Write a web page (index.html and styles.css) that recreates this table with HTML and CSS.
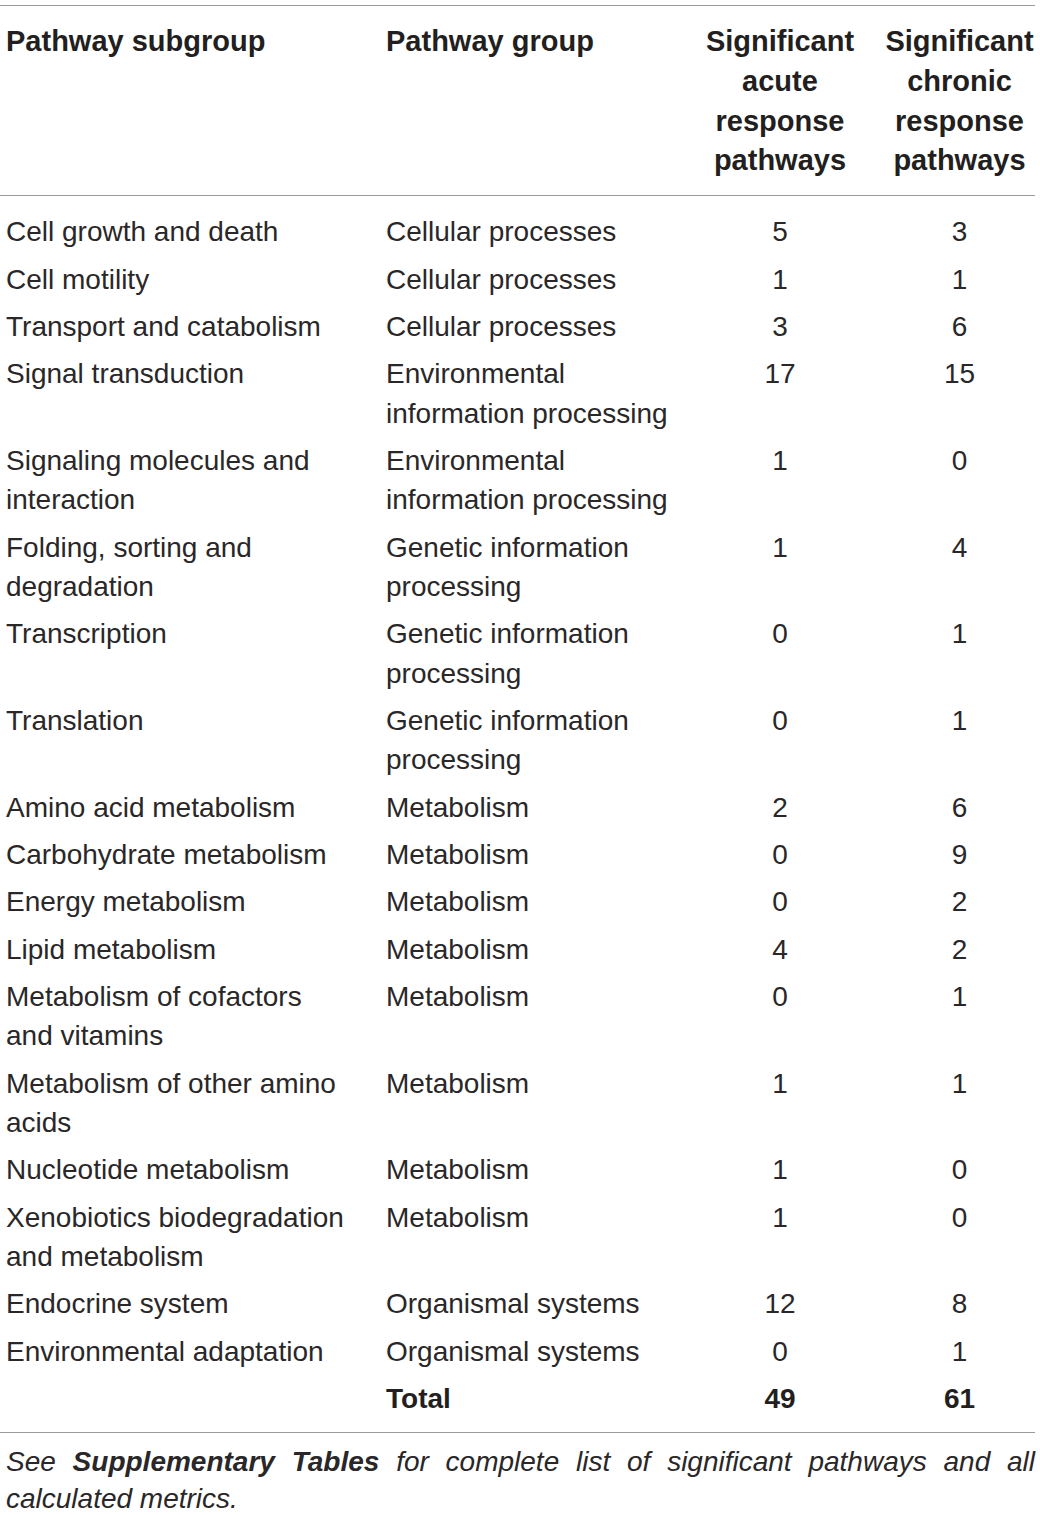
FILE: index.html
```html
<!DOCTYPE html>
<html lang="en">
<head>
<meta charset="utf-8">
<link rel="stylesheet" href="styles.css">
<title>Pathways</title>
</head>
<body>
<div class="wrap">
<table class="tbl">
  <colgroup>
    <col class="c1"><col class="c2"><col class="c3"><col class="c4">
  </colgroup>
  <thead>
    <tr>
      <th class="l">Pathway subgroup</th>
      <th class="l">Pathway group</th>
      <th class="n n3">Significant acute response pathways</th>
      <th class="n">Significant chronic response pathways</th>
    </tr>
  </thead>
  <tbody>
    <tr class="first"><td class="l">Cell growth and death</td><td class="l">Cellular processes</td><td class="n n3">5</td><td class="n">3</td></tr>
    <tr><td class="l">Cell motility</td><td class="l">Cellular processes</td><td class="n n3">1</td><td class="n">1</td></tr>
    <tr><td class="l">Transport and catabolism</td><td class="l">Cellular processes</td><td class="n n3">3</td><td class="n">6</td></tr>
    <tr><td class="l">Signal transduction</td><td class="l">Environmental information processing</td><td class="n n3">17</td><td class="n">15</td></tr>
    <tr><td class="l">Signaling molecules and interaction</td><td class="l">Environmental information processing</td><td class="n n3">1</td><td class="n">0</td></tr>
    <tr><td class="l">Folding, sorting and degradation</td><td class="l">Genetic information processing</td><td class="n n3">1</td><td class="n">4</td></tr>
    <tr><td class="l">Transcription</td><td class="l">Genetic information processing</td><td class="n n3">0</td><td class="n">1</td></tr>
    <tr><td class="l">Translation</td><td class="l">Genetic information processing</td><td class="n n3">0</td><td class="n">1</td></tr>
    <tr><td class="l">Amino acid metabolism</td><td class="l">Metabolism</td><td class="n n3">2</td><td class="n">6</td></tr>
    <tr><td class="l">Carbohydrate metabolism</td><td class="l">Metabolism</td><td class="n n3">0</td><td class="n">9</td></tr>
    <tr><td class="l">Energy metabolism</td><td class="l">Metabolism</td><td class="n n3">0</td><td class="n">2</td></tr>
    <tr><td class="l">Lipid metabolism</td><td class="l">Metabolism</td><td class="n n3">4</td><td class="n">2</td></tr>
    <tr><td class="l">Metabolism of cofactors and vitamins</td><td class="l">Metabolism</td><td class="n n3">0</td><td class="n">1</td></tr>
    <tr><td class="l">Metabolism of other amino acids</td><td class="l">Metabolism</td><td class="n n3">1</td><td class="n">1</td></tr>
    <tr><td class="l">Nucleotide metabolism</td><td class="l">Metabolism</td><td class="n n3">1</td><td class="n">0</td></tr>
    <tr><td class="l">Xenobiotics biodegradation and metabolism</td><td class="l">Metabolism</td><td class="n n3">1</td><td class="n">0</td></tr>
    <tr><td class="l">Endocrine system</td><td class="l">Organismal systems</td><td class="n n3">12</td><td class="n">8</td></tr>
    <tr><td class="l">Environmental adaptation</td><td class="l">Organismal systems</td><td class="n n3">0</td><td class="n">1</td></tr>
    <tr class="total"><td class="l"></td><td class="l b">Total</td><td class="n n3 b">49</td><td class="n b">61</td></tr>
  </tbody>
</table>
<p class="note">See <b>Supplementary Tables</b> for complete list of significant pathways and all calculated metrics.</p>
</div>
</body>
</html>
```

FILE: styles.css
```css
html, body {
  margin: 0;
  padding: 0;
  background: #ffffff;
}
body {
  font-family: "Liberation Sans", Arial, Helvetica, sans-serif;
  color: #2a2728;
}
.wrap {
  width: 1035px;
  padding-top: 5px;
}
.tbl {
  width: 1035px;
  border-collapse: collapse;
  table-layout: fixed;
  font-size: 28px;
  line-height: 39.35px;
}
.c1 { width: 386px; }
.c2 { width: 318px; }
.c3 { width: 180px; }
.c4 { width: 151px; }
.tbl thead tr {
  border-top: 1.5px solid #9a9a9a;
  border-bottom: 1.5px solid #9a9a9a;
}
.tbl th {
  font-size: 29px;
  line-height: 39.8px;
  font-weight: bold;
  color: #231f20;
  vertical-align: top;
  padding: 16px 0 14px 0;
}
.tbl td {
  font-weight: normal;
  vertical-align: top;
  padding: 4px 0;
}
.tbl .l {
  text-align: left;
}
.tbl th.l:first-child, .tbl td.l:first-child {
  padding-left: 6px;
  padding-right: 34px;
}
.tbl .n {
  text-align: center;
}
.tbl .n3 {
  padding-right: 28px;
}
.tbl tr.first td {
  padding-top: 16px;
}
.tbl tr.total td {
  padding-bottom: 14px;
}
.tbl tbody tr.total {
  border-bottom: 1.5px solid #9a9a9a;
}
.tbl .b {
  font-weight: bold;
  color: #231f20;
}
.note {
  margin: 10px 0 0 0;
  padding-left: 6px;
  font-size: 28px;
  line-height: 37px;
  font-style: italic;
  text-align: justify;
}
.note b {
  font-weight: bold;
}
```
